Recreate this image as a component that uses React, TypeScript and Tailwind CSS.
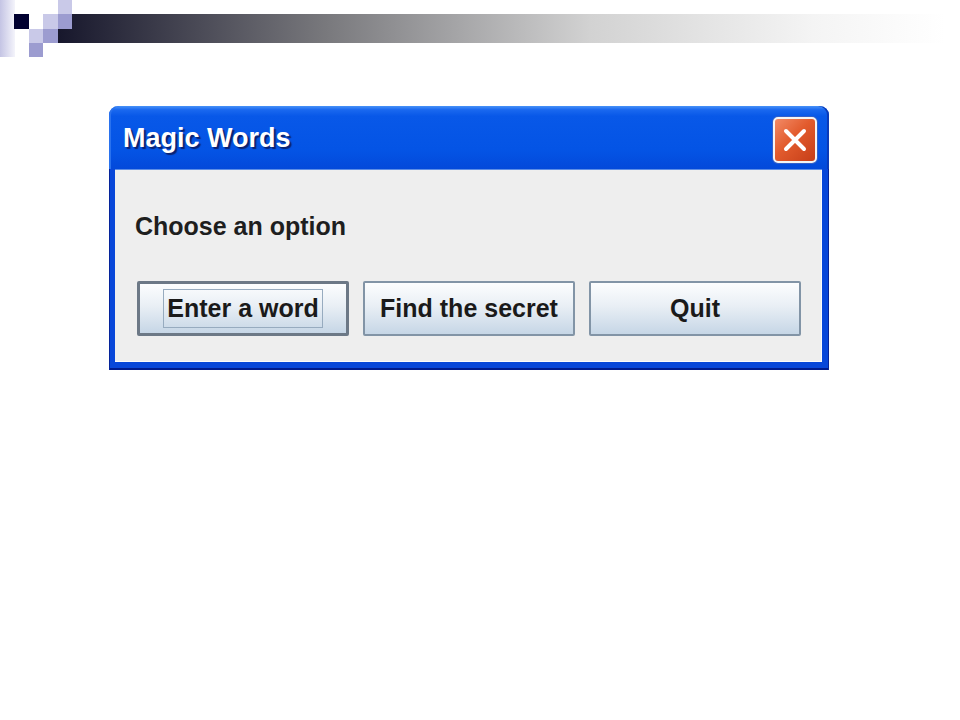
import React from "react";

function HeaderDecor() {
  return (
    <svg width="960" height="60" viewBox="0 0 960 60" className="block">
      <defs>
        <linearGradient id="strip" x1="0" y1="0" x2="1" y2="0">
          <stop offset="0" stopColor="#c4c4e4" />
          <stop offset="1" stopColor="#f4f4fb" />
        </linearGradient>
        <linearGradient id="bar" gradientUnits="userSpaceOnUse" x1="58" y1="0" x2="945" y2="0">
          <stop offset="0" stopColor="#17172c" />
          <stop offset="0.3" stopColor="#78787c" />
          <stop offset="0.6" stopColor="#d2d2d2" />
          <stop offset="0.85" stopColor="#f4f4f4" />
          <stop offset="1" stopColor="#ffffff" />
        </linearGradient>
      </defs>
      <rect x="0" y="0" width="15" height="57" fill="url(#strip)" />
      <rect x="58" y="14" width="887" height="29" fill="url(#bar)" />
      <rect x="58" y="0" width="14" height="14" fill="#c9c9e8" />
      <rect x="43" y="14" width="15" height="15" fill="#c9c9e8" />
      <rect x="29" y="29" width="14" height="14" fill="#c9c9e8" />
      <rect x="14" y="14" width="15" height="15" fill="#000030" />
      <rect x="58" y="14" width="14" height="15" fill="#9c9cd0" />
      <rect x="43" y="29" width="15" height="14" fill="#9c9cd0" />
      <rect x="29" y="43" width="14" height="14" fill="#9c9cd0" />
    </svg>
  );
}

function CloseButton() {
  return (
    <div className="w-[44px] h-[46px] rounded-[5px] border-2 border-[#f4f4f4] bg-[linear-gradient(135deg,#f28a66_0%,#e25b2d_45%,#c63e18_100%)] flex items-center justify-center shadow-[0_0_0_1px_#3560c8]">
      <svg width="26" height="26" viewBox="0 0 26 26">
        <path d="M4 4 L22 22 M22 4 L4 22" stroke="#ffffff" strokeWidth="4" strokeLinecap="round" />
      </svg>
    </div>
  );
}

function Button({ label, focused }: { label: string; focused?: boolean }) {
  return (
    <div
      className={
        "w-[212px] h-[55px] rounded-[2px] flex items-center justify-center bg-[linear-gradient(180deg,#fcfdfe_0%,#e9eff5_45%,#c6d6e6_100%)] text-[25px] font-bold text-[#1a1a1a] " +
        (focused ? "border-[3px] border-[#6c7886]" : "border-2 border-[#8294a6]")
      }
      style={{ fontFamily: '"Liberation Sans", Arial, sans-serif' }}
    >
      {focused ? (
        <span className="h-[39px] px-[3px] border border-[#97abbf] flex items-center leading-none">{label}</span>
      ) : (
        <span className="leading-none">{label}</span>
      )}
    </div>
  );
}

export default function App() {
  return (
    <div className="w-[960px] h-[720px] bg-white overflow-hidden" style={{ fontFamily: '"Liberation Sans", Arial, sans-serif' }}>
      <HeaderDecor />
      <div className="ml-[109px] mt-[46px] w-[720px] flex flex-col">
        <div className="h-[63px] rounded-t-[9px] bg-[linear-gradient(180deg,#4892f8_0%,#1a68ef_6%,#0858e8_16%,#0454e5_70%,#0349da_100%)] shadow-[inset_2px_0_0_#2a72ee,inset_-2px_0_0_#0a3ab8] flex items-start justify-between pl-[14px] pr-[12px]">
          <span className="mt-[17px] text-[27px] leading-[30px] font-bold text-white [text-shadow:2px_2px_1px_#0b2270]">
            Magic Words
          </span>
          <div className="mt-[11px]">
            <CloseButton />
          </div>
        </div>
        <div className="bg-[#0847d9] pl-[6px] pr-[7px] pb-[8px] shadow-[inset_1px_0_0_#06249a,inset_-1px_0_0_#06249a,inset_0_-2px_0_#001b8c]">
          <div className="h-[193px] bg-[#eeeeee] border-t border-[#5d8ee6] shadow-[inset_-1px_-1px_0_#fbfbfb] pl-[20px] pt-[42px]">
            <div className="text-[25px] leading-[28px] font-bold text-[#1e1e1e]">Choose an option</div>
            <div className="mt-[41px] ml-[2px] flex gap-[14px]">
              <Button label="Enter a word" focused />
              <Button label="Find the secret" />
              <Button label="Quit" />
            </div>
          </div>
        </div>
      </div>
    </div>
  );
}
